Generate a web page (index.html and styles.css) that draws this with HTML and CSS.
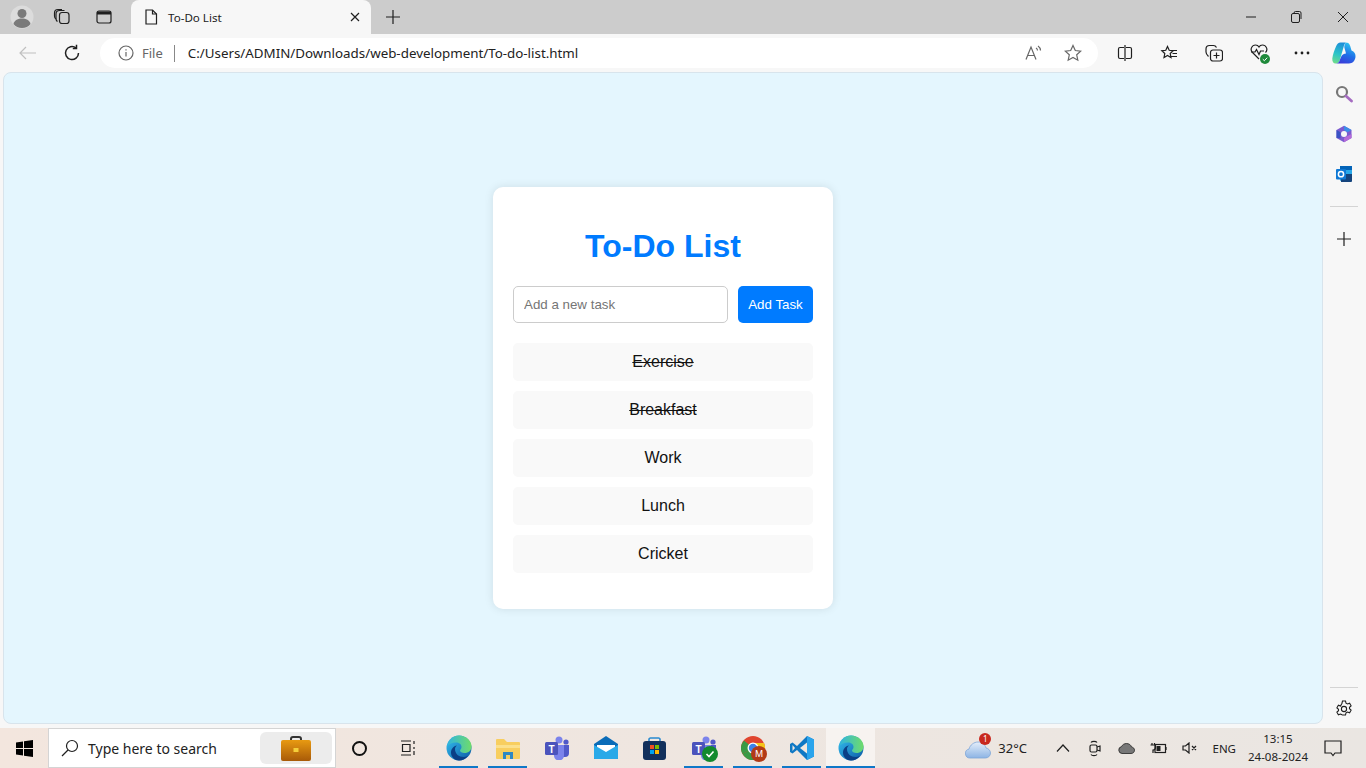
FILE: index.html
```html
<!DOCTYPE html>
<html lang="en">
<head>
<meta charset="utf-8">
<title>To-Do List</title>
<link rel="stylesheet" href="styles.css">
</head>
<body>
<svg class="defs" width="0" height="0" aria-hidden="true">
  <defs>
    <linearGradient id="edgeA" x1="0" y1="0" x2="1" y2="1"><stop offset="0" stop-color="#35c1f1"/><stop offset="1" stop-color="#0c59a4"/></linearGradient>
    <linearGradient id="edgeB" x1="0" y1="0" x2="1" y2="0"><stop offset="0" stop-color="#2fb4e0"/><stop offset="1" stop-color="#6fdc6a"/></linearGradient>
    <linearGradient id="bag" x1="0" y1="0" x2="0" y2="1"><stop offset="0" stop-color="#e89a12"/><stop offset="1" stop-color="#a85a08"/></linearGradient>
    <linearGradient id="copA" x1="0.5" y1="0" x2="0.3" y2="1"><stop offset="0" stop-color="#1c8fd8"/><stop offset="0.55" stop-color="#2cc4c8"/><stop offset="1" stop-color="#6fdc8a"/></linearGradient>
    <linearGradient id="copB" x1="0.7" y1="0" x2="0.3" y2="1"><stop offset="0" stop-color="#2cc8f0"/><stop offset="0.55" stop-color="#1f6fe8"/><stop offset="1" stop-color="#3a3ad8"/></linearGradient>
    <linearGradient id="cloudG" x1="0" y1="0" x2="0" y2="1"><stop offset="0" stop-color="#e4eefa"/><stop offset="1" stop-color="#8db4e4"/></linearGradient>
    <symbol id="edge" viewBox="0 0 26 26">
      <circle cx="13" cy="13" r="12.5" fill="url(#edgeA)"/>
      <path d="M1 12C2 5 7 .5 13 .5c7 0 12.5 5 12.500 11 0 4-3 6.500-7 6.500-2.500 0-4.500-1-4.500-2.500 0-1 1.500-1.500 1.500-3.500C15.500 9 13 7.500 10 7.500 6 7.500 2.500 9 1 12z" fill="url(#edgeB)"/>
      <path d="M9 14c0 5 4 8 8.500 8 1.500 0 3-.4 4.500-1.200C20 23.700 16.500 25.500 13 25.500 9 25.500 5 22 5 17.500 5 14 7.500 11 11 10.500 9.800 11.500 9 12.500 9 14z" fill="#0b3f86"/>
    </symbol>
    <symbol id="teams" viewBox="0 0 26 24">
      <circle cx="15" cy="4" r="3.500" fill="#7b83eb"/><circle cx="22" cy="6" r="2.600" fill="#5059c9"/>
      <path d="M18 9h7v8a4 4 0 0 1-4 4h-3z" fill="#5059c9"/>
      <path d="M9 9h11v10a5 5 0 0 1-10 1z" fill="#7b83eb"/>
      <rect x="1" y="6" width="13" height="13" rx="1.500" fill="#4b53bc"/>
      <text x="7.500" y="16.500" class="teams-t">T</text>
    </symbol>
  </defs>
</svg>

<div class="browser">
  <header class="tabstrip">
    <div class="avatar">
      <svg width="24" height="24" viewBox="0 0 24 24"><circle cx="12" cy="12" r="11.500" fill="#dcdcdc"/><circle cx="12" cy="8.500" r="4.500" fill="#7a7a7a"/><path d="M3.500 19c1-4 4.500-5.500 8.500-5.500s7.500 1.500 8.500 5.500c-2 2.500-5 4-8.500 4s-6.500-1.500-8.500-4z" fill="#7a7a7a"/></svg>
    </div>
    <div class="strip-btn workspaces">
      <svg width="18" height="18" viewBox="0 0 18 18" class="line"><rect x="6.500" y="4.500" width="9.500" height="11" rx="2.500"/><path d="M4.500 13.500c-1-.7-1.500-1.500-1.500-3V6c0-2 1.500-3.500 3.500-3.500h5"/><path d="M3 11c-1-.7-1.500-1.500-1.500-3V5c0-2 1.500-3.500 3.500-3.500h4"/></svg>
    </div>
    <div class="strip-btn tabsbtn">
      <svg width="16" height="16" viewBox="0 0 16 16" class="line"><rect x="1" y="2" width="14" height="12" rx="2"/><path class="solid" d="M1 2.500h14v3H1z"/></svg>
    </div>
    <div class="tab">
      <svg width="14" height="16" viewBox="0 0 14 16" class="line tab-ico"><path d="M2 1h6.500L12.500 5v10H2z"/><path d="M8.500 1v4h4"/></svg>
      <span class="tab-title">To-Do List</span>
      <svg width="10" height="10" viewBox="0 0 10 10" class="line tab-x"><path d="M1 1l8 8M9 1l-8 8"/></svg>
    </div>
    <div class="newtab">
      <svg width="16" height="16" viewBox="0 0 16 16" class="line"><path d="M8 1v14M1 8h14"/></svg>
    </div>
    <div class="winctl">
      <svg width="46" height="12" viewBox="0 0 46 12" class="line thin"><path d="M1 6h10"/></svg>
      <svg width="46" height="12" viewBox="0 0 46 12" class="line thin"><rect x="0.500" y="2.500" width="8" height="9" rx="1.500"/><path d="M3 2.500V2a1.500 1.500 0 0 1 1.500-1.500h4A1.500 1.500 0 0 1 10 2v6"/></svg>
      <svg width="12" height="12" viewBox="0 0 12 12" class="line thin"><path d="M1 1l10 10M11 1L1 11"/></svg>
    </div>
  </header>

  <nav class="toolbar">
    <svg width="18" height="14" viewBox="0 0 18 14" class="line back"><path d="M17 7H1M7 1L1 7l6 6"/></svg>
    <svg width="18" height="18" viewBox="0 0 18 18" class="line reload"><path d="M15.500 9A6.500 6.500 0 1 1 13 3.900"/><path d="M13.500 .8v3.700H9.800"/></svg>
    <div class="address">
      <svg width="16" height="16" viewBox="0 0 16 16" class="line info"><circle cx="8" cy="8" r="7"/><path d="M8 7v4.500M8 4.200v1.200"/></svg>
      <span class="file">File</span>
      <span class="sep"></span>
      <span class="url">C:/Users/ADMIN/Downloads/web-development/To-do-list.html</span>
      <svg width="17" height="16" viewBox="0 0 17 16" class="line addr-read"><path d="M1 14.500L6 2l5 12.500M2.800 10.500h6.500"/><path d="M11 3c1 .6 1.500 1.300 1.500 2.500M13 1c1.500 1 2.500 2.500 2.500 4.500"/></svg>
      <svg width="18" height="18" viewBox="0 0 18 18" class="line addr-star"><path d="M9 1.500l2.300 5 5.400.6-4 3.700 1.100 5.400L9 13.500l-4.800 2.700 1.100-5.400-4-3.700 5.400-.6z"/></svg>
    </div>
    <div class="tools">
      <svg width="16" height="16" viewBox="0 0 16 16" class="line"><path d="M7 2.500H3A1.500 1.500 0 0 0 1.500 4v8A1.500 1.500 0 0 0 3 13.500h4M9 2.500h4A1.500 1.500 0 0 1 14.500 4v8a1.500 1.500 0 0 1-1.500 1.500H9M8 0v16"/></svg>
      <svg width="18" height="18" viewBox="0 0 18 18" class="line"><path d="M7.500 2.500l1.700 3.800 4 .5-3 2.700.8 4-3.500-2-3.500 2 .8-4-3-2.700 4-.5z"/><path d="M12 6.500h5M12.500 9.500h4.500M11 12.500h6"/></svg>
      <svg width="18" height="18" viewBox="0 0 18 18" class="line"><rect x="5.500" y="6" width="12" height="11" rx="2.500"/><path d="M11.500 8.500v6M8.500 11.500h6"/><path d="M3.500 12.500C2 11 1 10 1 8V5c0-2 1.500-3.500 3.500-3.500h4c1.500 0 2.500 1 3 2"/></svg>
      <span class="health">
        <svg width="21" height="18" viewBox="0 0 21 18" class="line"><path d="M9 15L2.500 8.500C-.5 5.500 2 1 5.500 1 7 1 8.300 1.700 9 3c.7-1.300 2-2 3.500-2 3.500 0 6 4.500 3 7.500"/><path d="M1 8h4l1.500-2.500L9 10.500 10.500 7H14"/></svg>
        <svg class="health-ok" width="10" height="10" viewBox="0 0 10 10"><circle cx="5" cy="5" r="5" fill="#1f8a3b"/><path d="M2.800 5.200l1.600 1.500 2.800-3" fill="none" stroke="#fff" stroke-width="1"/></svg>
      </span>
      <svg width="16" height="4" viewBox="0 0 16 4" class="dots"><circle cx="2" cy="2" r="1.400"/><circle cx="8" cy="2" r="1.400"/><circle cx="14" cy="2" r="1.400"/></svg>
    </div>
    <svg width="24" height="22" viewBox="0 0 24 22" class="copilot"><path d="M8.500 .5h5.500c-1 .5-1.500 1.500-2 3L8 17.500c-.6 2.500-2 4-4.500 4C1.500 21.500 0 19.500.3 16.500.8 12.500 2.500 8 4 4.500 5 2 6.500.5 8.500.5z" fill="url(#copA)"/><path d="M14 .5c2 0 3.500 1 4.200 3.500l1.300 4.500c2.800 1 4.300 3.200 4 6.500-.4 3.700-3 6.500-6.500 6.500H3.500c2.500 0 3.900-1.500 4.500-4l1.500-3.500c1-1.500 2.500-2.300 4.500-2.500l-1.500-5.500c-.5-2 .5-5.500 2-5.500z" fill="url(#copB)"/></svg>
  </nav>

  <div class="workarea">
    <main class="page">
      <section class="card">
        <h1 class="card-title">To-Do List</h1>
        <form class="add-row">
          <input class="task-input" type="text" placeholder="Add a new task">
          <button class="add-btn" type="button">Add Task</button>
        </form>
        <ul class="task-list">
          <li class="task done">Exercise</li>
          <li class="task done">Breakfast</li>
          <li class="task">Work</li>
          <li class="task">Lunch</li>
          <li class="task">Cricket</li>
        </ul>
      </section>
    </main>
    <aside class="sidebar">
      <svg width="18" height="18" viewBox="0 0 18 18" class="side-ico"><circle cx="7" cy="7" r="5" fill="none" stroke="#777" stroke-width="2.200"/><path d="M11 11l5.500 5" stroke="#a56cc1" stroke-width="2.800" stroke-linecap="round"/></svg>
      <svg width="18" height="18" viewBox="0 0 18 18" class="side-ico"><path d="M9 .8l7.500 4.200v8L9 17.200 1.500 13V5z" fill="#7c5bd0"/><path d="M9 .8l7.500 4.200-4 2.300L9 5.300z" fill="#3d8ee8"/><path d="M1.500 5L5.500 7.300v6L1.500 13z" fill="#3a52c4"/><path d="M9 17.200l7.500-4.200V9l-4 2-3.500 2z" fill="#b56ad8"/><circle cx="9" cy="9" r="3" fill="#f7f7f7"/></svg>
      <svg width="18" height="18" viewBox="0 0 18 18" class="side-ico"><rect x="5" y="1" width="12" height="15" rx="1" fill="#28a8ea"/><rect x="5" y="1" width="12" height="4" fill="#0364b8"/><path d="M6 9h11v7a1 1 0 0 1-1 1H6z" fill="#14447d"/><rect x="1" y="4" width="10" height="10.500" rx="1" fill="#0f78d4"/><circle cx="6" cy="9.200" r="2.600" fill="none" stroke="#fff" stroke-width="1.500"/></svg>
      <span class="side-rule"></span>
      <svg width="14" height="14" viewBox="0 0 14 14" class="line side-plus"><path d="M7 0v14M0 7h14"/></svg>
      <span class="side-fill"></span>
      <span class="side-rule low"></span>
      <svg width="18" height="18" viewBox="0 0 18 18" class="line side-gear"><path d="M7.500 1h3l.5 2.200 1.500.8 2.100-.8 1.500 2.600-1.600 1.500v1.400l1.600 1.500-1.500 2.600-2.100-.8-1.500.8-.5 2.200h-3L7 14.800l-1.500-.8-2.100.8-1.500-2.600 1.600-1.500V9.300L1.900 7.800l1.500-2.600 2.100.8L7 3.200z"/><circle cx="9" cy="9" r="2.600"/></svg>
    </aside>
  </div>

  <footer class="taskbar">
    <svg width="17" height="17" viewBox="0 0 17 17" class="start"><path d="M0 2.500L7 1.500v6.500H0zM8 1.300L17 0v8H8zM0 9h7v6.500L0 14.500zM8 9h9v8l-9-1.300z" fill="#000"/></svg>
    <div class="search">
      <svg width="18" height="18" viewBox="0 0 18 18" class="line"><circle cx="11" cy="7" r="5.500"/><path d="M7 11l-6 6"/></svg>
      <span class="search-text">Type here to search</span>
      <span class="search-pic">
        <svg width="30" height="25" viewBox="0 0 30 25"><path d="M10 6V3a2 2 0 0 1 2-2h6a2 2 0 0 1 2 2v3" fill="none" stroke="#333" stroke-width="2"/><rect y="4" width="30" height="21" rx="2" fill="url(#bag)"/><rect x="12.500" y="12" width="5" height="4" fill="#f5cf3a"/></svg>
      </span>
    </div>
    <div class="cortana"></div>
    <div class="taskview">
      <svg width="16" height="16" viewBox="0 0 16 16" class="line"><path d="M0 1h10M0 15h10M1.500 4.500h7.500v7H1.500zM13 1v3M13 7v2M13 11v4"/></svg>
    </div>
    <div class="apps">
      <span class="app on"><svg width="26" height="26"><use href="#edge"/></svg></span>
      <span class="app on"><svg width="24" height="21" viewBox="0 0 24 21"><path d="M0 2a1 1 0 0 1 1-1h7l3 3h12a1 1 0 0 1 1 1v15a1 1 0 0 1-1 1H1a1 1 0 0 1-1-1z" fill="#f8ce5f"/><path d="M0 7h24v3H0z" fill="#fbe08c"/><path d="M7 21v-7h10v7h-3v-4h-4v4z" fill="#2f88c4"/></svg></span>
      <span class="app"><svg width="26" height="24"><use href="#teams"/></svg></span>
      <span class="app"><svg width="24" height="24" viewBox="0 0 24 24"><path d="M0 8L12 0l12 8v14a1 1 0 0 1-1 1H1a1 1 0 0 1-1-1z" fill="#0a6cb8"/><path d="M3 9h18v6l-9 4-9-4z" fill="#fff"/><path d="M0 9l12 7 12-7v13a1 1 0 0 1-1 1H1a1 1 0 0 1-1-1z" fill="#29a9e8"/></svg></span>
      <span class="app"><svg width="23" height="23" viewBox="0 0 23 23"><path d="M6 4V2a1.500 1.500 0 0 1 1.500-1h8A1.500 1.500 0 0 1 17 2v2" fill="none" stroke="#2a8bd0" stroke-width="1.600"/><rect y="4" width="23" height="19" rx="3" fill="#12305c"/><rect x="7" y="8" width="4" height="4" fill="#f25022"/><rect x="12" y="8" width="4" height="4" fill="#7fba00"/><rect x="7" y="13" width="4" height="4" fill="#00a4ef"/><rect x="12" y="13" width="4" height="4" fill="#ffb900"/></svg></span>
      <span class="app on"><svg width="26" height="24"><use href="#teams"/></svg>
        <svg class="over-badge" width="16" height="16" viewBox="0 0 16 16"><circle cx="8" cy="8" r="8" fill="#128a2e"/><path d="M4.500 8l2.500 2.500 4.500-5" fill="none" stroke="#fff" stroke-width="1.600"/></svg>
      </span>
      <span class="app on"><svg width="24" height="24" viewBox="0 0 24 24"><circle cx="12" cy="12" r="12" fill="#e0452f"/><path d="M12 12L1.600 18A12 12 0 0 1 3 4.500z" fill="#3a9a45"/><path d="M12 12l10.400 6A12 12 0 0 0 23 7H12z" fill="#f5c518"/><path d="M12 12l-10.400 6A12 12 0 0 0 14 23.800z" fill="#3a9a45"/><circle cx="12" cy="12" r="5.500" fill="#fff"/><circle cx="12" cy="12" r="4.200" fill="#3c82e8"/></svg>
        <span class="chrome-m">M</span>
      </span>
      <span class="app on"><svg width="24" height="24" viewBox="0 0 24 24"><path d="M17 0l7 3.500v17L17 24 7 14l-4.500 3.500L0 16V8l2.500-1.500L7 10z" fill="#0f78c4"/><path d="M17 0l7 3.500v17L17 24z" fill="#2aa4ec"/><path d="M17 6.500L10 12l7 5.500z" fill="#f1e8e0"/><path d="M2.500 9L5 12l-2.500 3z" fill="#f1e8e0"/></svg></span>
      <span class="app on active"><svg width="26" height="26"><use href="#edge"/></svg></span>
    </div>
    <div class="tray">
      <span class="weather">
        <svg width="26" height="22" viewBox="0 0 26 22"><path d="M5 21a4.500 4.500 0 0 1-1-8.900C5 8 9 5 13 5c4 0 7 2.500 8 6 2.500.5 4.500 2.500 4.500 5s-2 5-5 5z" fill="url(#cloudG)" stroke="#7da6d8" stroke-width=".8"/></svg>
        <span class="weather-badge">1</span>
      </span>
      <span class="temp">32°C</span>
      <svg width="14" height="8" viewBox="0 0 14 8" class="line tray-chev"><path d="M1 7.500L7 1l6 6.500"/></svg>
      <svg width="12" height="17" viewBox="0 0 12 17" class="line tray-meet"><rect x="1" y="5" width="7" height="7" rx="1.500"/><path d="M8 7l3-1v5l-3-1M2 2.500C3 1 7 1 8 2.500M2 14.500c1 1.500 5 1.500 6 0"/></svg>
      <svg width="17" height="11" viewBox="0 0 17 11" class="tray-cloud"><path d="M4 10.500a3.500 3.500 0 0 1-.5-6.900C4.500 1.500 6.500.5 8.500.5c2.500 0 4.500 1.500 5 3.500 2 .3 3 1.700 3 3.200 0 1.800-1.300 3.300-3.500 3.300z" fill="#777" stroke="#222" stroke-width=".8"/></svg>
      <svg width="17" height="12" viewBox="0 0 17 12" class="line tray-batt"><rect x="5" y="2.500" width="10.500" height="8"/><path d="M16 5v3M2 1v2M4.500 1v2M.5 3h5v2.500A2.500 2.500 0 0 1 3 8v3"/><rect class="solid" x="6.500" y="4" width="4" height="5"/></svg>
      <svg width="15" height="12" viewBox="0 0 15 12" class="line tray-vol"><path d="M1 4h2.500L7 1v10L3.500 8H1zM10 4l4 4M14 4l-4 4"/></svg>
      <span class="lang">ENG</span>
      <span class="clock"><span>13:15</span><span>24-08-2024</span></span>
      <svg width="18" height="17" viewBox="0 0 18 17" class="line tray-note"><path d="M1 1h16v12h-6l-2 2.500L7 13H1z"/></svg>
    </div>
  </footer>
</div>
</body>
</html>
```
FILE: styles.css
```css
* { box-sizing: border-box; }
html, body { margin: 0; padding: 0; height: 100%; overflow: hidden; }
body { font-family: "Liberation Sans", Arial, sans-serif; background: #f7f7f7; }
.defs { position: absolute; }
.line { fill: none; stroke: #1f1f1f; stroke-width: 1.200; flex: none; }
.line .solid { fill: #1f1f1f; stroke: none; }
.line.thin { stroke-width: 1; }
.browser { display: flex; flex-direction: column; height: 768px; }

/* tab strip */
.tabstrip { display: flex; align-items: center; height: 34px; background: #cccccc; flex: none; }
.avatar { margin-left: 10px; width: 24px; height: 24px; }
.strip-btn { display: flex; align-items: center; }
.workspaces { margin-left: 19px; }
.tabsbtn { margin-left: 25px; }
.tab { display: flex; align-items: center; align-self: flex-end; margin-left: 19px; width: 240px; height: 34px; padding: 0 11px 0 13px; background: #f7f7f7; border-radius: 8px 8px 0 0; }
.tab-ico { margin-right: 10px; }
.tab-title { flex: 1; font: 11.6px "Noto Sans", sans-serif; color: #222; }
.newtab { margin-left: 14px; display: flex; }
.winctl { margin-left: auto; margin-right: 17px; display: flex; align-items: center; }

/* toolbar */
.toolbar { display: flex; align-items: center; height: 38px; flex: none; background: #f7f7f7; }
.back { margin-left: 19px; stroke: #c0c0c0; }
.reload { margin-left: 26px; stroke-width: 1.500; }
.address { display: flex; align-items: center; margin-left: 19px; width: 998px; height: 30px; background: #fff; border-radius: 15px; padding: 0 16px 0 18px; font: 13.35px "Noto Sans", sans-serif; color: #222; }
.info { stroke: #666; }
.file { margin-left: 8px; color: #666; font-size: 13px; }
.sep { width: 1px; height: 17px; background: #888; margin: 0 13px 0 11px; }
.url { flex: 1; }
.addr-read { stroke: #666; margin-right: 22px; }
.addr-star { stroke: #666; }
.tools { display: flex; align-items: center; margin-left: 19px; gap: 27px; }
.health { position: relative; display: flex; }
.health-ok { position: absolute; right: 1px; bottom: -2px; }
.dots { fill: #1f1f1f; margin-left: -4px; }
.copilot { margin-left: 22px; }

/* work area */
.workarea { display: flex; height: 656px; flex: none; }
.page { display: flex; align-items: center; justify-content: center; width: 1320px; height: 652px; margin-left: 3px; background: #e4f6fe; border: 1px solid #d8e4ec; border-radius: 8px; }
.card { width: 340px; height: 422px; padding: 20px; background: #fff; border-radius: 10px; box-shadow: 0 0 10px rgba(0, 0, 0, 0.1); }
.card-title { margin: 21px 0 21px; font-size: 32px; line-height: 37px; font-weight: 700; text-align: center; color: #007bff; }
.add-row { display: flex; gap: 10px; margin-bottom: 20px; }
.task-input { flex: 1; min-width: 0; height: 37px; padding: 10px; font: 13.33px "Liberation Sans", Arial, sans-serif; border: 1px solid #ccc; border-radius: 5px; background: #fff; outline: 0; }
.task-input::placeholder { color: #757575; }
.add-btn { width: 75px; height: 37px; padding: 0; font: 13.33px "Liberation Sans", Arial, sans-serif; color: #fff; background: #007bff; border: 0; border-radius: 5px; }
.task-list { display: flex; flex-direction: column; gap: 10px; margin: 0; padding: 0; list-style: none; }
.task { height: 38px; line-height: 37px; text-align: center; font-size: 16px; color: #111; background: #f9f9f9; border-radius: 5px; }
.done { text-decoration: line-through; }

/* sidebar */
.sidebar { flex: 1; display: flex; flex-direction: column; align-items: center; padding: 13px 1px 0 0; }
.side-ico { margin-bottom: 22px; }
.side-rule { width: 28px; height: 1px; background: #d4d4d4; margin-top: 1px; }
.side-plus { margin-top: 25px; }
.side-fill { flex: 1; }
.side-rule.low { margin-bottom: 12px; }
.side-gear { margin-bottom: 10px; stroke-width: 1.100; }

/* taskbar */
.taskbar { display: flex; align-items: center; height: 40px; flex: none; background: linear-gradient(90deg, #f3e6de, #eae6e2); font-family: "Noto Sans", sans-serif; color: #222; }
.start { margin-left: 16px; }
.search { display: flex; align-items: center; margin-left: 15px; width: 288px; height: 40px; padding: 0 3px 0 12px; background: #fff; border: 1px solid #d4d4d4; }
.search-text { flex: 1; margin-left: 9px; font-size: 14px; }
.search-pic { display: flex; align-items: center; justify-content: center; width: 72px; height: 32px; background: #ececec; border-radius: 6px; }
.cortana { margin-left: 16px; width: 15px; height: 15px; border: 2px solid #111; border-radius: 50%; }
.taskview { display: flex; margin-left: 34px; }
.apps { display: flex; margin-left: 17px; height: 40px; }
.app { position: relative; display: flex; align-items: center; justify-content: center; width: 49px; height: 40px; }
.app.on::after { content: ""; position: absolute; left: 5px; right: 5px; bottom: 0; height: 2px; background: #0f78c8; }
.app.active { background: #f7f3f0; width: 49px; }
.app.active::after { left: 0; right: 0; }
.over-badge { position: absolute; right: 10px; bottom: 6px; }
.chrome-m { position: absolute; right: 10px; bottom: 6px; width: 16px; height: 16px; border-radius: 50%; background: #b23a16; color: #fff; font-size: 9px; line-height: 16px; text-align: center; }
.tray { display: flex; align-items: center; margin-left: auto; font-size: 11.5px; }
.weather { position: relative; display: flex; margin-right: 7px; }
.weather-badge { position: absolute; top: -4px; right: 0; width: 12px; height: 12px; border-radius: 50%; background: #c8281e; color: #fff; font-size: 8px; line-height: 12px; text-align: center; }
.temp { font-size: 13px; margin-right: 29px; }
.tray-chev { margin-right: 19px; }
.tray-meet { margin-right: 17.500px; }
.tray-cloud { margin-right: 15px; }
.tray-batt { margin-right: 15px; }
.tray-vol { margin-right: 15px; }
.lang { margin-right: 6px; }
.clock { display: flex; flex-direction: column; align-items: center; width: 72px; line-height: 18px; }
.tray-note { margin: 0 24px 0 10px; }
.teams-t { font: 700 10px "Liberation Sans", Arial, sans-serif; fill: #fff; text-anchor: middle; }
```
